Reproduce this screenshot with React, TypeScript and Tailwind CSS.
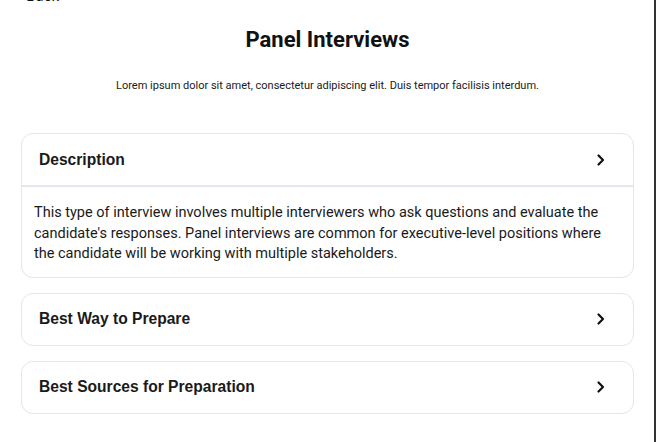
import React from 'react';

const sections = [
  {
    title: 'Description',
    open: true,
    body: "This type of interview involves multiple interviewers who ask questions and evaluate the candidate's responses. Panel interviews are common for executive-level positions where the candidate will be working with multiple stakeholders.",
  },
  { title: 'Best Way to Prepare', open: false, body: '' },
  { title: 'Best Sources for Preparation', open: false, body: '' },
];

function Chevron() {
  return (
    <svg width="10" height="14" viewBox="0 0 10 14" fill="none" className="shrink-0">
      <path d="M2.5 2.5 7 7l-4.5 4.5" stroke="#111" strokeWidth="2.2" strokeLinecap="round" strokeLinejoin="round" />
    </svg>
  );
}

export default function App() {
  return (
    <div className="w-[656px] min-h-[442px] bg-white border-r-2 border-[#333] overflow-hidden font-['Roboto',sans-serif] text-[#111]">
      <div className="pl-[21px] pr-[20px]">
        <div className="-mt-[11px] text-[15px] leading-[15px] text-[#111]">
          <span className="-ml-[3px]">‹ Back</span>
        </div>

        <h1 className="mt-[22px] text-center text-[22px] leading-[28px] font-bold">
          Panel Interviews
        </h1>
        <p className="mt-[23px] text-center text-[11px] leading-[18px] text-[#1a1a1a]">
          Lorem ipsum dolor sit amet, consectetur adipiscing elit. Duis tempor facilisis interdum.
        </p>

        <div className="mt-[38px] flex flex-col gap-[15px]">
          {sections.map((s) => (
            <div key={s.title} className="rounded-[12px] border border-[#e3e6ea] bg-white">
              <div
                className={`flex items-center justify-between pl-[17px] pr-[27px] ${
                  s.open ? 'h-[53px] border-b-2 border-[#e3e8ee]' : 'h-[51px]'
                }`}
              >
                <span className="font-['Liberation_Sans',Arial,sans-serif] text-[15.6px] font-bold text-[#1a1a1a]">
                  {s.title}
                </span>
                <Chevron />
              </div>
              {s.open && (
                <div className="px-[12px] pt-[16px] pb-[12px] text-[14.5px] leading-[20.5px] text-[#1a1a1a]">
                  {s.body}
                </div>
              )}
            </div>
          ))}
        </div>
      </div>
    </div>
  );
}
